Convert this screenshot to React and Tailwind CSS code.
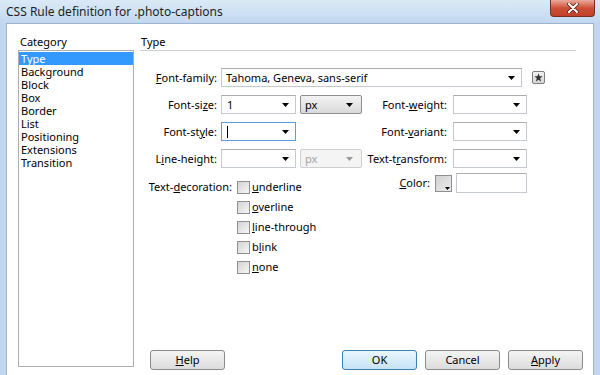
import React from "react";

const Arrow = ({ gray }) => (
  <svg width="7" height="4" viewBox="0 0 7 4" className="shrink-0">
    <polygon points="0,0 7,0 3.5,4" fill={gray ? "#9a9a9a" : "#000"} />
  </svg>
);

const Select = ({ w, focused, children }) => (
  <div
    className={`h-[19px] ${w} bg-white border ${
      focused ? "border-[#569de5]" : "border-[#c5cad1] border-t-[#abadb3]"
    } flex items-center pr-[6px] pl-[4px]`}
  >
    <div className="flex-1 flex items-center">{children}</div>
    <Arrow />
  </div>
);

const UnitSelect = ({ disabled }) => (
  <div
    className={`h-[19px] w-[62px] rounded-[2px] border flex items-center pl-[4px] pr-[8px] ${
      disabled
        ? "border-[#cfcfcf] bg-[#f4f4f4] text-[#a3a3a3]"
        : "border-[#8e8f8f] bg-gradient-to-b from-[#f3f3f3] to-[#dadada]"
    }`}
  >
    <span className="flex-1 leading-[14px]">px</span>
    <Arrow gray={disabled} />
  </div>
);

const Label = ({ pre, u, post, cls }) => (
  <span className={`text-right leading-[14px] ${cls || ""}`}>
    {pre}
    <u>{u}</u>
    {post}
  </span>
);

const Checkbox = ({ pre, u, post }) => (
  <div className="h-[20px] flex items-center">
    <div className="w-[13px] h-[13px] border border-[#8e8f8f] bg-gradient-to-br from-[#d3d3d3] to-[#f6f6f6]" />
    <span className="ml-[2px] leading-[14px]">
      {pre}
      <u>{u}</u>
      {post}
    </span>
  </div>
);

const Button = ({ children, primary }) => (
  <div
    className={`w-[75px] h-[20px] rounded-[3px] border flex items-center justify-center leading-[14px] ${
      primary
        ? "border-[#3c7fb1] bg-gradient-to-b from-[#eaf6fd] to-[#c6e4f6]"
        : "border-[#8a8a8a] bg-gradient-to-b from-[#f4f4f4] to-[#dcdcdc]"
    }`}
  >
    {children}
  </div>
);

export default function App() {
  const items = [
    "Type",
    "Background",
    "Block",
    "Box",
    "Border",
    "List",
    "Positioning",
    "Extensions",
    "Transition",
  ];
  return (
    <div className="w-[600px] h-[375px] overflow-hidden flex flex-col bg-[#c2d7ef] font-['Noto_Sans','Liberation_Sans',sans-serif] text-[11px] text-black">
      {/* Title bar */}
      <div className="relative h-[23px] shrink-0 flex items-center bg-gradient-to-b from-[#dbe9f7] via-[#cfe1f4] to-[#c2d7ef]">
        <span className="pl-[6px] text-[12px] leading-[16px] text-[#1e1e1e]">
          CSS Rule definition for .photo-captions
        </span>
        <div className="absolute right-[5px] top-0 w-[45px] h-[17px] rounded-b-[4px] border border-t-0 border-[#7a2c20] bg-gradient-to-b from-[#e9a99b] via-[#cd4f38] to-[#c2402b] flex items-center justify-center">
          <svg width="12" height="10" viewBox="0 0 12 10">
            <path d="M2 1 L10 9 M10 1 L2 9" stroke="#5a2018" strokeWidth="3.6" strokeLinecap="round" />
            <path d="M2 1 L10 9 M10 1 L2 9" stroke="#ffffff" strokeWidth="2" strokeLinecap="round" />
          </svg>
        </div>
      </div>

      {/* Body */}
      <div className="flex-1 flex px-[6px]">
        <div className="flex-1 flex bg-white border border-b-0 border-[#9db3cd] pl-[11px] pr-[10px]">
          {/* Category column */}
          <div className="w-[116px] flex flex-col pt-[11px]">
            <div className="h-[14px] leading-[14px] pl-[2px]">Category</div>
            <div className="mt-[1px] h-[317px] border border-[#adadad] pt-[1px]">
              {items.map((it, i) => (
                <div
                  key={it}
                  className={`h-[13px] leading-[13px] pl-[2px] ${
                    i === 0 ? "bg-[#3399ff] text-white" : ""
                  }`}
                >
                  {it}
                </div>
              ))}
            </div>
          </div>

          {/* Right panel */}
          <div className="flex-1 ml-[6px] flex flex-col pt-[11px]">
            <div className="h-[16px] mr-[7px] border-b border-[#cfcfcf] leading-[14px] pl-[1px]">
              Type
            </div>

            {/* Font-family */}
            <div className="mt-[17px] flex items-center h-[19px]">
              <Label cls="w-[77px]" pre="" u="F" post="ont-family:" />
              <div className="ml-[4px]">
                <Select w="w-[301px]">
                  <span className="leading-[14px]">Tahoma, Geneva, sans-serif</span>
                </Select>
              </div>
              <div className="ml-[10px] w-[13px] h-[13px] border border-[#7d7d7d] rounded-[2px] bg-gradient-to-b from-[#f3f3f3] to-[#d6d6d6] flex items-center justify-center">
                <svg width="9" height="9" viewBox="0 0 10 10">
                  <polygon
                    points="5,0.3 6.2,3.6 9.7,3.7 6.9,5.9 7.9,9.4 5,7.4 2.1,9.4 3.1,5.9 0.3,3.7 3.8,3.6"
                    fill="#333"
                  />
                </svg>
              </div>
            </div>

            <div className="mt-[8px] flex">
              {/* left sub-column */}
              <div className="w-[222px] flex flex-col">
                <div className="flex items-center h-[19px]">
                  <Label cls="w-[77px]" pre="Font-si" u="z" post="e:" />
                  <div className="ml-[4px]">
                    <Select w="w-[75px]">
                      <span className="leading-[14px] pl-[1px]">1</span>
                    </Select>
                  </div>
                  <div className="ml-[4px]">
                    <UnitSelect />
                  </div>
                </div>
                <div className="mt-[8px] flex items-center h-[19px]">
                  <Label cls="w-[77px]" pre="Font-st" u="y" post="le:" />
                  <div className="ml-[4px]">
                    <Select w="w-[75px]" focused>
                      <div className="w-[1px] h-[12px] bg-black ml-[1px]" />
                    </Select>
                  </div>
                </div>
                <div className="mt-[8px] flex items-center h-[19px]">
                  <Label cls="w-[77px]" pre="L" u="i" post="ne-height:" />
                  <div className="ml-[4px]">
                    <Select w="w-[75px]" />
                  </div>
                  <div className="ml-[4px]">
                    <UnitSelect disabled />
                  </div>
                </div>

                <div className="mt-[9px] flex">
                  <div className="w-[92px] h-[20px] flex items-center justify-end">
                    <Label pre="Text-" u="d" post="ecoration:" />
                  </div>
                  <div className="ml-[5px] flex flex-col">
                    <Checkbox u="u" post="nderline" />
                    <Checkbox u="o" post="verline" />
                    <Checkbox u="l" post="ine-through" />
                    <Checkbox pre="b" u="l" post="ink" />
                    <Checkbox u="n" post="one" />
                  </div>
                </div>
              </div>

              {/* right sub-column */}
              <div className="w-[165px] flex flex-col">
                <div className="flex items-center h-[19px]">
                  <Label cls="flex-1" pre="Font-" u="w" post="eight:" />
                  <div className="ml-[6px]">
                    <Select w="w-[74px]" />
                  </div>
                </div>
                <div className="mt-[8px] flex items-center h-[19px]">
                  <Label cls="flex-1" pre="Font-" u="v" post="ariant:" />
                  <div className="ml-[6px]">
                    <Select w="w-[74px]" />
                  </div>
                </div>
                <div className="mt-[8px] flex items-center h-[19px]">
                  <Label cls="flex-1" pre="Text-t" u="r" post="ansform:" />
                  <div className="ml-[6px]">
                    <Select w="w-[74px]" />
                  </div>
                </div>
                <div className="mt-[5px] flex items-center h-[20px]">
                  <Label cls="flex-1" pre="" u="C" post="olor:" />
                  <div className="ml-[5px] relative w-[17px] h-[17px] border border-[#8e8f8f] bg-gradient-to-br from-[#d2d2d2] to-[#ececec]">
                    <svg width="5" height="3" viewBox="0 0 5 3" className="absolute right-[1px] bottom-[1px]">
                      <polygon points="0,0 5,0 2.5,3" fill="#000" />
                    </svg>
                  </div>
                  <div className="ml-[4px] w-[71px] h-[20px] border border-[#c5cad1] border-t-[#abadb3] bg-white" />
                </div>
              </div>
            </div>

            {/* Buttons */}
            <div className="mt-[73px] flex">
              <div className="ml-[10px]">
                <Button>
                  <u>H</u>elp
                </Button>
              </div>
              <div className="ml-auto flex gap-[8px]">
                <Button primary>OK</Button>
                <Button>Cancel</Button>
                <Button>
                  <u>A</u>pply
                </Button>
              </div>
            </div>
          </div>
        </div>
      </div>
    </div>
  );
}
